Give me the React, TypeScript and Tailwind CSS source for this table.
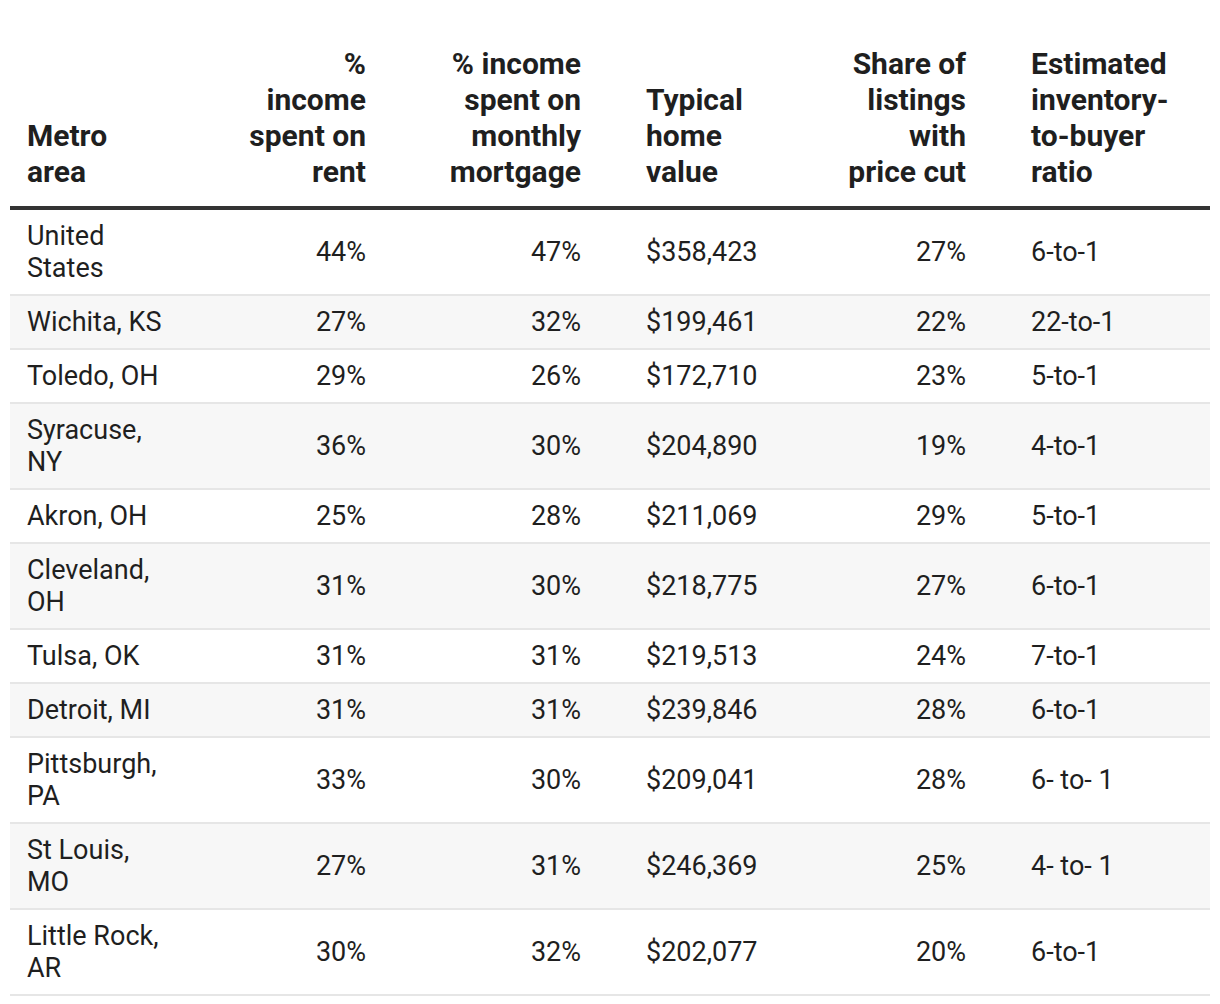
import React from "react";

type Row = {
  metro: string;
  rent: string;
  mortgage: string;
  value: string;
  cut: string;
  ratio: string;
};

const rows: Row[] = [
  { metro: "United States", rent: "44%", mortgage: "47%", value: "$358,423", cut: "27%", ratio: "6-to-1" },
  { metro: "Wichita, KS", rent: "27%", mortgage: "32%", value: "$199,461", cut: "22%", ratio: "22-to-1" },
  { metro: "Toledo, OH", rent: "29%", mortgage: "26%", value: "$172,710", cut: "23%", ratio: "5-to-1" },
  { metro: "Syracuse, NY", rent: "36%", mortgage: "30%", value: "$204,890", cut: "19%", ratio: "4-to-1" },
  { metro: "Akron, OH", rent: "25%", mortgage: "28%", value: "$211,069", cut: "29%", ratio: "5-to-1" },
  { metro: "Cleveland, OH", rent: "31%", mortgage: "30%", value: "$218,775", cut: "27%", ratio: "6-to-1" },
  { metro: "Tulsa, OK", rent: "31%", mortgage: "31%", value: "$219,513", cut: "24%", ratio: "7-to-1" },
  { metro: "Detroit, MI", rent: "31%", mortgage: "31%", value: "$239,846", cut: "28%", ratio: "6-to-1" },
  { metro: "Pittsburgh, PA", rent: "33%", mortgage: "30%", value: "$209,041", cut: "28%", ratio: "6- to- 1" },
  { metro: "St Louis, MO", rent: "27%", mortgage: "31%", value: "$246,369", cut: "25%", ratio: "4- to- 1" },
  { metro: "Little Rock, AR", rent: "30%", mortgage: "32%", value: "$202,077", cut: "20%", ratio: "6-to-1" },
];

export default function App() {
  return (
    <div
      className="min-h-screen bg-white px-[10px] pt-[46px] text-[#1f1f1f]"
      style={{ fontFamily: "Roboto, 'Liberation Sans', sans-serif" }}
    >
      <table className="w-[1200px] table-fixed border-collapse">
        <colgroup>
          <col className="w-[186px]" />
          <col className="w-[194px]" />
          <col className="w-[224px]" />
          <col className="w-[192px]" />
          <col className="w-[184px]" />
          <col className="w-[220px]" />
        </colgroup>
        <thead>
          <tr className="border-b-4 border-[#333]">
            <th className="pl-[17px] pr-[26px] pb-[16px] text-left align-bottom text-[30px] font-bold leading-[36px]">
              Metro area
            </th>
            <th className="pr-[24px] pb-[16px] text-right align-bottom text-[30px] font-bold leading-[36px]">
              <div className="ml-auto w-[122px]">% income spent on rent</div>
            </th>
            <th className="pr-[33px] pb-[16px] text-right align-bottom text-[30px] font-bold leading-[36px]">
              <div className="ml-auto w-[140px]">% income spent on monthly mortgage</div>
            </th>
            <th className="pl-[32px] pb-[16px] text-left align-bottom text-[30px] font-bold leading-[36px]">
              <div className="w-[130px]">Typical home value</div>
            </th>
            <th className="pr-[24px] pb-[16px] text-right align-bottom text-[30px] font-bold leading-[36px]">
              <div className="ml-auto w-[125px]">Share of listings with price cut</div>
            </th>
            <th className="pl-[41px] pb-[16px] text-left align-bottom text-[30px] font-bold leading-[36px]">
              <div className="w-[160px]">Estimated inventory-to-buyer ratio</div>
            </th>
          </tr>
        </thead>
        <tbody className="text-[27px] leading-[32px]">
          {rows.map((r, i) => (
            <tr
              key={r.metro}
              className={`border-b-2 border-[#e6e6e6] ${i % 2 === 1 ? "bg-[#f7f7f7]" : "bg-white"}`}
            >
              <td className="py-[10px] pl-[17px] pr-[26px] text-left align-middle">{r.metro}</td>
              <td className="py-[10px] pr-[24px] text-right align-middle">{r.rent}</td>
              <td className="py-[10px] pr-[33px] text-right align-middle">{r.mortgage}</td>
              <td className="py-[10px] pl-[32px] text-left align-middle">{r.value}</td>
              <td className="py-[10px] pr-[24px] text-right align-middle">{r.cut}</td>
              <td className="py-[10px] pl-[41px] text-left align-middle">{r.ratio}</td>
            </tr>
          ))}
        </tbody>
      </table>
    </div>
  );
}
